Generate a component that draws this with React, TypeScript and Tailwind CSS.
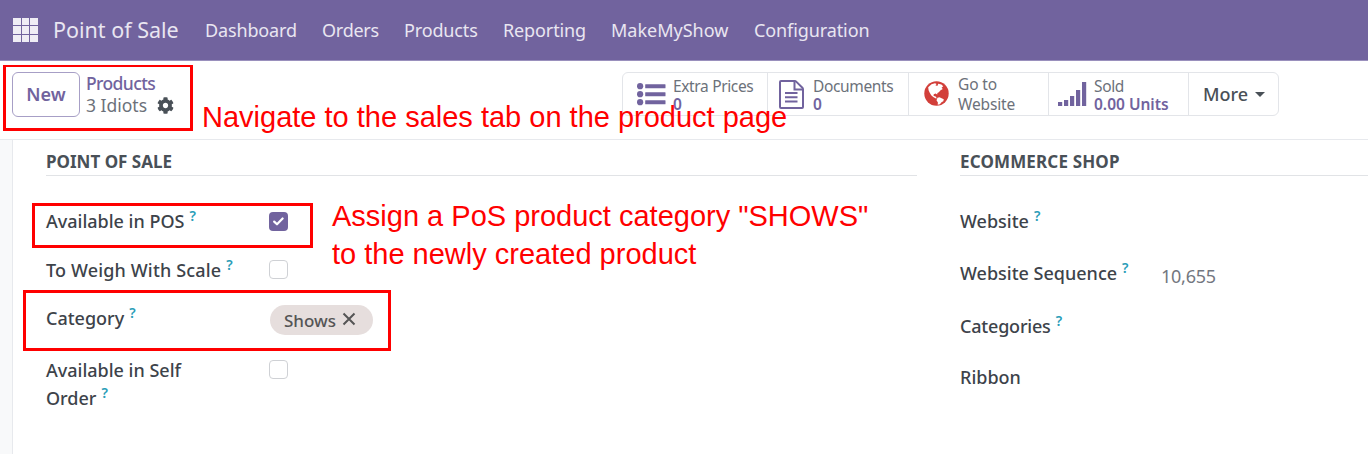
import type { ReactNode } from "react";
import { FaCog } from "react-icons/fa";

const navItems = [
  { label: "Dashboard", cls: "w-[117px] tracking-[-0.15px]" },
  { label: "Orders", cls: "w-[82px] tracking-[-0.25px]" },
  { label: "Products", cls: "w-[99px] tracking-[-0.15px]" },
  { label: "Reporting", cls: "w-[108px] tracking-[-0.12px]" },
  { label: "MakeMyShow", cls: "w-[143px]" },
  { label: "Configuration", cls: "w-[130px] tracking-[-0.1px]" },
];

function AppsIcon() {
  return (
    <svg width="25" height="24" viewBox="0 0 25 24" fill="#efedf5" shapeRendering="crispEdges">
      {[0, 9, 17].map((x) =>
        [0, 8, 17].map((y) => (
          <rect key={`${x}-${y}`} x={x} y={y} width={x === 9 ? 7 : 8} height={y === 8 ? 8 : 7} />
        )),
      )}
    </svg>
  );
}

function ListIcon() {
  return (
    <svg width="29" height="23" viewBox="0 0 29 23" fill="#71639e">
      {[3.2, 11.2, 19.2].map((y) => (
        <g key={y}>
          <circle cx="3.1" cy={y} r="3.1" />
          <rect x="8.2" y={y - 2} width="20.3" height="4" rx="0.5" />
        </g>
      ))}
    </svg>
  );
}

function DocumentIcon() {
  return (
    <svg width="25" height="29" viewBox="0 0 25 29" fill="none" stroke="#71639e" strokeWidth="2">
      <path d="M15.8 1H2a1 1 0 0 0-1 1v25a1 1 0 0 0 1 1h21a1 1 0 0 0 1-1V9.2a2 2 0 0 0-.6-1.4l-6.2-6.2A2 2 0 0 0 15.8 1z" />
      <path d="M15.5 1v8.500H24M6 13h12.500M6 17.300h12.500M6 21.600h12.500" />
    </svg>
  );
}

function GlobeIcon() {
  return (
    <svg width="25" height="25" viewBox="0 0 25 25">
      <circle cx="12.500" cy="12.500" r="12.200" fill="#d23f3a" />
      <path
        fill="#fff"
        d="M4.200 6.200 7.500 3.300 11 2.200 12.600 3.100 11.400 4.300 13.300 5 14.300 2.800 17.400 3.500 19.200 5.200 17.600 6.800 18.800 8 16.600 9.200 14.800 11.200 13.400 12 13.200 13.600 11.600 12.600 9.700 13.300 9.600 15 11.200 15.300 12.300 16.300 12.600 17.400 11.400 17.200 9.200 15.900 7.200 14.300 5.600 11.600 4.600 9.200z"
      />
      <path fill="#fff" d="M13.500 16.700 15.500 16.200 17.600 17.200 19.800 18.300 19.300 20.200 17.500 21.200 15.900 23.200 13.700 23.700 13.900 21.400 12.500 19.200z" />
    </svg>
  );
}

function SignalIcon() {
  return (
    <svg width="29" height="25" viewBox="0 0 29 25" fill="#71639e">
      <rect x="0" y="20" width="4.200" height="4" />
      <rect x="6" y="18" width="4.200" height="6" />
      <rect x="12" y="14" width="4.200" height="10" />
      <rect x="18" y="8" width="4.200" height="16" />
      <rect x="24" y="0" width="4.200" height="24" />
    </svg>
  );
}

function StatButton({ icon, top, bottom, cls, strong = true }: { icon: ReactNode; top: string; bottom: string; cls: string; strong?: boolean }) {
  return (
    <div className={`flex shrink-0 border-r border-[#e3e5e9] ${cls}`}>
      {icon}
      <div className={`text-[15.500px] whitespace-nowrap text-[#6c717a] ${strong ? "pt-[4px] leading-[18px]" : "pt-[1px] leading-[20px]"}`}>
        <div className={strong ? "tracking-[-0.350px]" : "tracking-[-0.150px]"}>{top}</div>
        <div className={strong ? "font-semibold text-[#71639e]" : "tracking-[-0.150px]"}>{bottom}</div>
      </div>
    </div>
  );
}

function Label({ children, help = true }: { children: ReactNode; help?: boolean }) {
  return (
    <span className="text-[18px] leading-[28px] font-medium whitespace-nowrap text-[#3d434a]">
      {children}
      {help && <span className="relative -top-[7px] ml-[5px] text-[14px] leading-none font-semibold text-[#2a9db8]">?</span>}
    </span>
  );
}

function Checkbox({ checked = false }: { checked?: boolean }) {
  return checked ? (
    <div className="flex size-[19px] items-center justify-center rounded-[4px] bg-[#71639e]">
      <svg width="11" height="9" viewBox="0 0 11 9" fill="none" stroke="white" strokeWidth="2.200" strokeLinecap="round" strokeLinejoin="round">
        <path d="M1.200 4.600 4 7.300 9.600 1.500" />
      </svg>
    </div>
  ) : (
    <div className="size-[19px] rounded-[4px] border border-[#cfd1d5] bg-white" />
  );
}

export default function App() {
  return (
    <div className="relative flex h-[454px] w-[1368px] flex-col overflow-hidden bg-white font-['Noto_Sans','Open_Sans',sans-serif]">
      <header className="flex h-[61px] shrink-0 items-center border-b border-[#9a90bd] bg-[#71639e] pl-[13px] text-[#e9e6f1]">
        <AppsIcon />
        <span className="ml-[15px] w-[152px] text-[21.500px] whitespace-nowrap">Point of Sale</span>
        <nav className="flex text-[18px] whitespace-nowrap">
          {navItems.map((n) => (
            <span key={n.label} className={n.cls}>{n.label}</span>
          ))}
        </nav>
      </header>

      <section className="flex h-[79px] shrink-0 items-start border-b border-[#e7e9ed] pl-[12px]">
        <button className="mt-[11px] flex h-[45px] w-[68px] items-center justify-center rounded-[6px] border border-[#a79fc6] text-[18px] font-semibold text-[#71639e]">New</button>
        <div className="ml-[6px] w-[536px] pt-[11px] text-[17.500px] leading-[22px]">
          <div className="font-medium tracking-[-0.600px] text-[#71639e]">Products</div>
          <div className="flex items-center text-[#6c717a]">
            3 Idiots
            <FaCog className="ml-[10px] size-[17px] text-[#495057]" />
          </div>
        </div>
        <div className="mt-[11px] flex h-[44px] w-[657px] rounded-[6px] border border-[#e3e5e9]">
          <StatButton cls="w-[145px] pl-[14px]" icon={<div className="w-[36px] pt-[10px]"><ListIcon /></div>} top="Extra Prices" bottom="0" />
          <StatButton cls="w-[141px] pl-[11px]" icon={<div className="w-[34px] pt-[7px]"><DocumentIcon /></div>} top="Documents" bottom="0" />
          <StatButton cls="w-[140px] pl-[15px]" strong={false} icon={<div className="w-[34px] pt-[8px]"><GlobeIcon /></div>} top="Go to" bottom="Website" />
          <StatButton cls="w-[140px] pl-[9px]" icon={<div className="w-[36px] pt-[9px]"><SignalIcon /></div>} top="Sold" bottom="0.00 Units" />
          <div className="flex items-center pl-[14px] text-[18px] font-medium text-[#495057]">
            More
            <span className="ml-[7px] border-x-[5px] border-t-[5px] border-x-transparent border-t-[#495057]" />
          </div>
        </div>
      </section>

      <main className="flex flex-1 bg-[#f8f9fa]">
        <div className="ml-[12px] flex flex-1 border-l border-[#e7e9ed] bg-white pl-[33px]">
          <section className="w-[871px]">
            <h2 className="mt-[8px] h-[28px] border-b border-[#e1e3e6] text-[17px] leading-[28px] font-bold text-[#495057]">POINT OF SALE</h2>
            <div className="flex h-[49px] pt-[31px]">
              <div className="w-[223px]"><Label>Available in POS</Label></div>
              <div className="pt-[5px]"><Checkbox checked /></div>
            </div>
            <div className="flex h-[49px] pt-[31px]">
              <div className="w-[223px] tracking-[0.150px]"><Label>To Weigh With Scale</Label></div>
              <div className="pt-[4px]"><Checkbox /></div>
            </div>
            <div className="flex h-[49px] pt-[30px]">
              <div className="w-[224px]"><Label>Category</Label></div>
              <div className="mt-[1px] flex h-[30px] w-[103px] shrink-0 items-center rounded-full bg-[#e6dedd] pl-[14px] text-[17px] font-medium text-[#555]">
                <span className="pt-[2px]">Shows</span>
                <svg className="mb-[3px] ml-[6px]" width="14" height="14" viewBox="0 0 14 14" stroke="#555" strokeWidth="2">
                  <path d="M1.500 1.500 12.500 12.500M12.500 1.500 1.500 12.500" />
                </svg>
              </div>
            </div>
            <div className="flex pt-[33px]">
              <div className="w-[223px]"><Label>Available in Self<br />Order</Label></div>
              <div className="pt-[4px]"><Checkbox /></div>
            </div>
          </section>
          <section className="ml-[43px] flex-1">
            <h2 className="mt-[8px] h-[28px] border-b border-[#e1e3e6] text-[17px] leading-[28px] font-bold tracking-[0.150px] text-[#495057]">ECOMMERCE SHOP</h2>
            <div className="h-[52px] pt-[31px]"><Label>Website</Label></div>
            <div className="flex h-[53px] pt-[31px]">
              <div className="w-[201px]"><Label>Website Sequence</Label></div>
              <span className="pt-[3px] text-[18px] leading-[28px] tracking-[-0.250px] text-[#737780]">10,655</span>
            </div>
            <div className="h-[51px] pt-[31px] tracking-[-0.200px]"><Label>Categories</Label></div>
            <div className="pt-[31px]"><Label help={false}>Ribbon</Label></div>
          </section>
        </div>
      </main>

      <div className="absolute top-[65px] left-[3px] h-[66px] w-[190px] border-[3px] border-t-[2px] border-[#ff0000]" />
      <div className="absolute top-[203px] left-[32px] h-[45px] w-[281px] border-[3px] border-[#ff0000]" />
      <div className="absolute top-[290px] left-[23px] h-[61px] w-[368px] border-[3px] border-[#ff0000]" />
      <p className="absolute top-[98px] left-[202px] font-['Liberation_Sans',sans-serif] text-[29px] leading-[38px] whitespace-nowrap text-[#ff0000]">Navigate to the sales tab on the product page</p>
      <p className="absolute top-[197px] left-[332px] font-['Liberation_Sans',sans-serif] text-[29px] leading-[38px] whitespace-nowrap text-[#ff0000]">Assign a PoS product category "SHOWS"<br />to the newly created product</p>
    </div>
  );
}
